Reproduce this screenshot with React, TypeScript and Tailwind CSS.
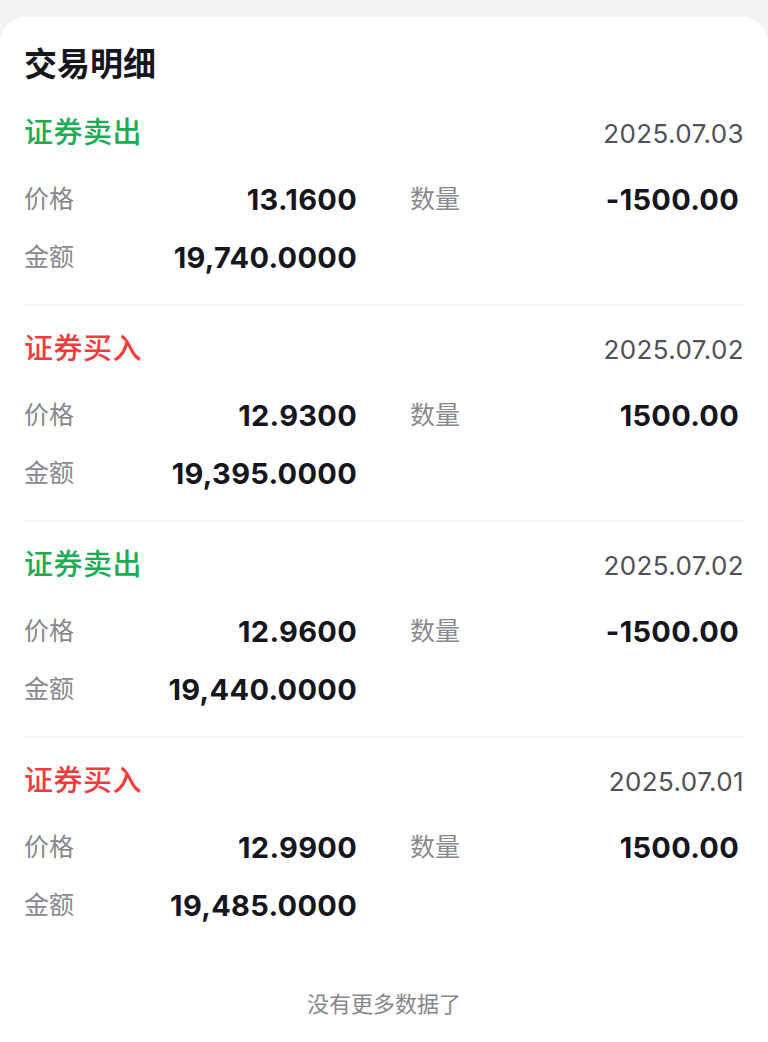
import React from 'react';

type Trade = {
  side: 'sell' | 'buy';
  date: string;
  price: string;
  qty: string;
  amount: string;
};

const TRADES: Trade[] = [
  { side: 'sell', date: '2025.07.03', price: '13.1600', qty: '-1500.00', amount: '19,740.0000' },
  { side: 'buy', date: '2025.07.02', price: '12.9300', qty: '1500.00', amount: '19,395.0000' },
  { side: 'sell', date: '2025.07.02', price: '12.9600', qty: '-1500.00', amount: '19,440.0000' },
  { side: 'buy', date: '2025.07.01', price: '12.9900', qty: '1500.00', amount: '19,485.0000' },
];

const FONT = 'font-["Inter","Noto_Sans_CJK_SC",sans-serif]';

function TradeItem({ trade, last }: { trade: Trade; last: boolean }) {
  const isSell = trade.side === 'sell';
  return (
    <div className={`pt-6 pb-[17px] ${last ? '' : 'border-b border-[#f0f0f2]'}`}>
      <div className="flex items-center justify-between h-10">
        <span
          className={`text-[29px] font-medium tracking-[0.5px] ${isSell ? 'text-[#1aad56]' : 'text-[#f23c3c]'}`}
        >
          {isSell ? '证券卖出' : '证券买入'}
        </span>
        <span className="text-[26px] tracking-[0.4px] text-[#505058]">{trade.date}</span>
      </div>
      <div className="mt-[18px] grid grid-cols-[333px_1fr] gap-x-[53px]">
        <div className="flex items-center justify-between h-[58px]">
          <span className="text-[25px] text-[#88888e]">价格</span>
          <span className="text-[29px] font-bold tracking-[0.3px] text-[#16161f]">{trade.price}</span>
        </div>
        <div className="flex items-center justify-between h-[58px] pr-[5px]">
          <span className="text-[25px] text-[#88888e]">数量</span>
          <span className="text-[29px] font-bold tracking-[0.3px] text-[#16161f]">{trade.qty}</span>
        </div>
        <div className="flex items-center justify-between h-[58px]">
          <span className="text-[25px] text-[#88888e]">金额</span>
          <span className="text-[29px] font-bold tracking-[0.3px] text-[#16161f]">{trade.amount}</span>
        </div>
      </div>
    </div>
  );
}

export default function App() {
  return (
    <div className={`min-h-[1042px] bg-[#f2f3f5] pt-[17px] ${FONT}`}>
      <div className="bg-white rounded-t-[26px] px-6 pt-6 min-h-[1025px]">
        <h1 className="h-12 flex items-center text-[33px] font-bold text-[#16161f]">交易明细</h1>
        {TRADES.map((t, i) => (
          <TradeItem key={i} trade={t} last={i === TRADES.length - 1} />
        ))}
        <div className="pt-[36px] text-center text-[22px] text-[#86868c]">没有更多数据了</div>
      </div>
    </div>
  );
}
